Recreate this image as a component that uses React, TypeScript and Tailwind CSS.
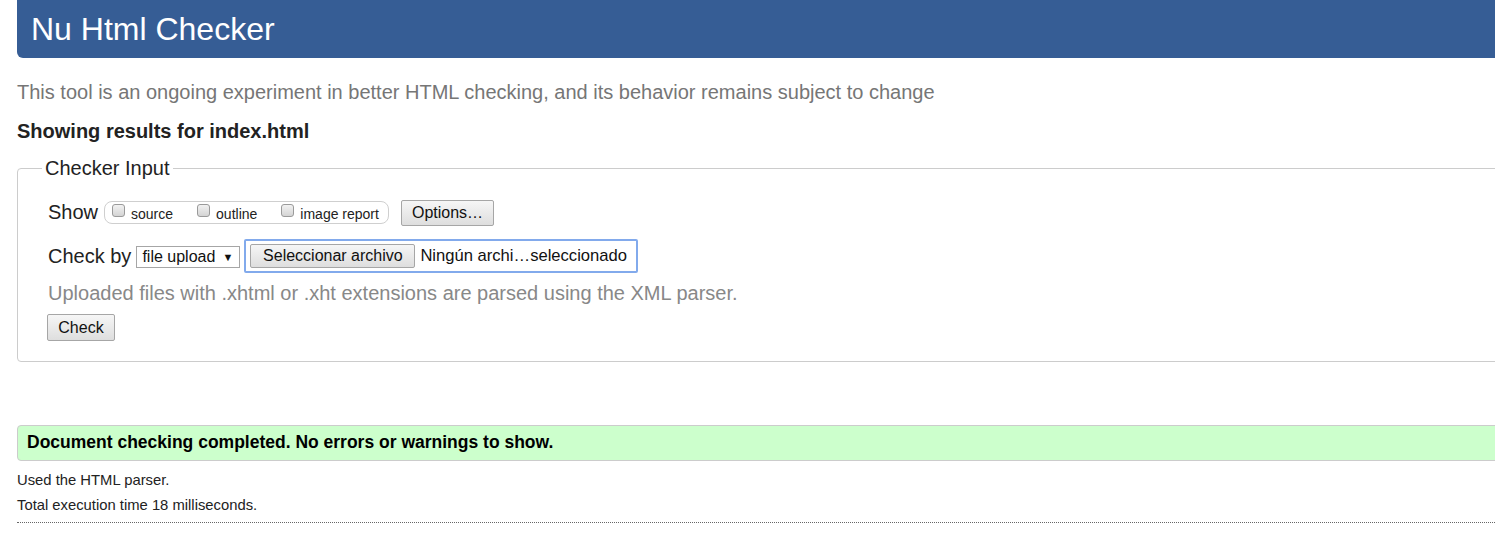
function Box() {
  return (
    <span className="mt-[1px] inline-block h-[13px] w-[13px] shrink-0 self-start rounded-[3px] border border-[#9a9a9a] bg-gradient-to-b from-[#f2f2f2] to-[#d4d4d4]" />
  );
}

function Btn({ children, className = "" }: { children: React.ReactNode; className?: string }) {
  return (
    <button
      className={
        "flex items-center justify-center rounded-[2px] border border-[#a6a6a6] bg-gradient-to-b from-[#f6f6f6] to-[#dedede] text-[16px] leading-none text-[#111] " +
        className
      }
    >
      {children}
    </button>
  );
}

export default function App() {
  const options = ["source", "outline", "image report"];
  return (
    <div className="h-[551px] w-full overflow-hidden bg-white font-['Liberation_Sans',Arial,sans-serif] text-[#222]">
      <div className="ml-[17px] w-[1560px]">
        <header className="flex h-[58px] items-center rounded-bl-[6px] bg-[#365d95] pl-[14px]">
          <h1 className="text-[32px] leading-none text-white">Nu Html Checker</h1>
        </header>

        <p className="mt-[20px] text-[20px] leading-[28px] text-[#767676]">
          This tool is an ongoing experiment in better HTML checking, and its behavior remains subject to change
        </p>
        <p className="mt-[13px] text-[20px] font-bold leading-[24px] text-[#222]">Showing results for index.html</p>

        <fieldset className="mt-[13px] rounded-[4px] border border-[#cccccc] pb-[20px] pl-[30px]">
          <legend className="ml-[-6px] px-[3px] text-[20px] leading-[24px] text-[#222]">Checker Input</legend>

          <div className="mt-[18px] flex h-[28px] items-center">
            <span className="text-[20px] leading-none">Show</span>
            <div className="ml-[6px] flex h-[23px] w-[285px] items-center rounded-[8px] border border-[#cfcfcf] pl-[7px]">
              {options.map((o) => (
                <label key={o} className="mr-[24px] flex items-start gap-[6px] pt-[1px] last:mr-0">
                  <Box />
                  <span className="mt-[3px] text-[14px] leading-[16px] text-[#222]">{o}</span>
                </label>
              ))}
            </div>
            <Btn className="ml-[12px] mt-[2px] h-[26px] w-[93px]">Options…</Btn>
          </div>

          <div className="mt-[13px] flex h-[34px] items-center">
            <span className="text-[20px] leading-none">Check by</span>
            <div className="ml-[5px] mt-[2px] flex h-[22px] w-[104px] items-center justify-between border border-[#a6a6a6] bg-white pl-[5px] pr-[6px] text-[16px] leading-none text-[#111]">
              <span>file upload</span>
              <span className="text-[11px]">▼</span>
            </div>
            <div className="ml-[4px] flex h-[34px] w-[394px] items-center rounded-[2px] border-2 border-[#82aaec] pl-[4px]">
              <Btn className="h-[24px] w-[165px] text-[16.3px]">Seleccionar archivo</Btn>
              <span className="ml-[5px] text-[16.6px] leading-none text-[#111]">Ningún archi…seleccionado</span>
            </div>
          </div>

          <p className="mt-[8px] text-[20px] leading-[24px] text-[#888]">
            Uploaded files with .xhtml or .xht extensions are parsed using the XML parser.
          </p>

          <Btn className="-ml-px mt-[9px] h-[27px] w-[68px]">Check</Btn>
        </fieldset>

        <div className="mt-[63px] flex h-[36px] items-center rounded-[4px] border border-[#cccccc] bg-[#ccffcc] pl-[9px]">
          <span className="text-[17.5px] font-bold leading-none text-black">
            Document checking completed. No errors or warnings to show.
          </span>
        </div>

        <p className="mt-[9px] text-[14.8px] leading-[20px] text-[#222]">Used the HTML parser.</p>
        <p className="mt-[5px] text-[14.8px] leading-[20px] text-[#222]">Total execution time 18 milliseconds.</p>
        <div className="mt-[7px] border-t border-dotted border-[#666]" />
      </div>
    </div>
  );
}
